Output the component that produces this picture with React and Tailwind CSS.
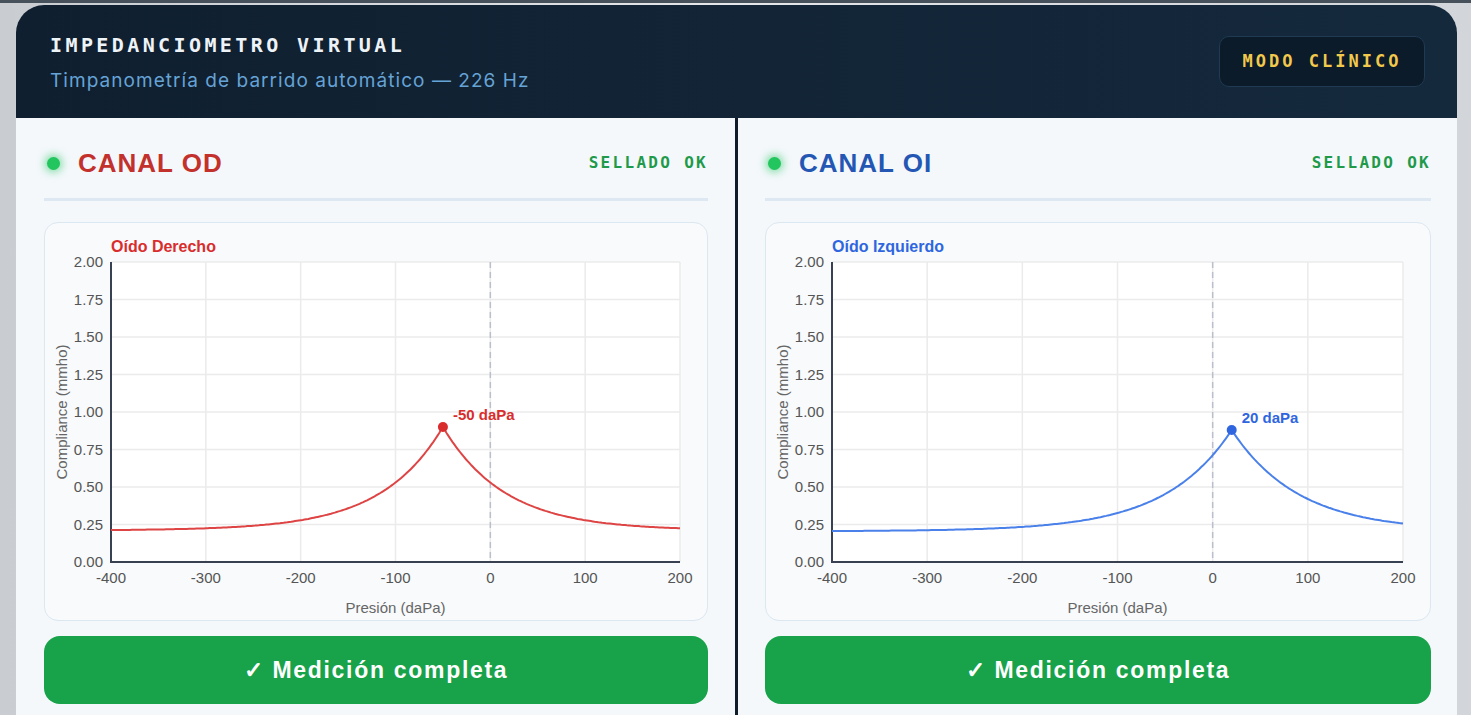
import React from 'react';

// curva de timpanometría: base + pico exponencial
const curvePath = (peak, base, amp, w, px, py) => {
  const pts = [];
  for (let p = -400; p <= 200; p += 2) {
    const c = base + amp * Math.exp(-Math.abs(p - peak) / w);
    pts.push(`${px(p).toFixed(1)},${py(c).toFixed(1)}`);
  }
  return 'M' + pts.join(' L');
};

const Chart = ({ title, titleColor, lineColor, peak, base, amp, w, width, label }) => {
  const H = 397;
  const x0 = 66;
  const x1 = width - 27;
  const y0 = 39;
  const y1 = 339;
  const px = (p) => x0 + ((p + 400) / 600) * (x1 - x0);
  const py = (c) => y1 - (c / 2) * (y1 - y0);
  const yTicks = [0, 0.25, 0.5, 0.75, 1, 1.25, 1.5, 1.75, 2];
  const xTicks = [-400, -300, -200, -100, 0, 100, 200];
  const peakVal = base + amp;
  const font = "'Liberation Sans', Arial, sans-serif";

  return (
    <svg width={width} height={H} style={{ fontFamily: font }}>
      <text x={x0} y={29} fontSize="16" fontWeight="700" fill={titleColor}>{title}</text>
      <rect x={x0} y={y0} width={x1 - x0} height={y1 - y0} fill="#ffffff" />
      {yTicks.map((t) => (
        <line key={'gy' + t} x1={x0} x2={x1} y1={py(t)} y2={py(t)} stroke="#ebebeb" strokeWidth="1.5" />
      ))}
      {xTicks.map((t) => (
        <line key={'gx' + t} x1={px(t)} x2={px(t)} y1={y0} y2={y1} stroke="#ebebeb" strokeWidth="1.5" />
      ))}
      <line x1={px(0)} x2={px(0)} y1={y0} y2={y1} stroke="#b9c0cc" strokeWidth="1.5" strokeDasharray="6 4" />
      <line x1={x0} x2={x0} y1={y0} y2={y1 + 1} stroke="#374151" strokeWidth="2" />
      <line x1={x0 - 1} x2={x1} y1={y1} y2={y1} stroke="#374151" strokeWidth="2" />
      {yTicks.map((t) => (
        <text key={'ly' + t} x={x0 - 8} y={py(t) + 5} fontSize="15" fill="#555" textAnchor="end">{t.toFixed(2)}</text>
      ))}
      {xTicks.map((t) => (
        <text key={'lx' + t} x={px(t)} y={y1 + 21} fontSize="15" fill="#555" textAnchor="middle">{t}</text>
      ))}
      <text x={(x0 + x1) / 2} y={390} fontSize="15" fill="#666" textAnchor="middle">Presión (daPa)</text>
      <text x={0} y={0} fontSize="15" fill="#666" textAnchor="middle" transform="translate(22 189) rotate(-90)">Compliance (mmho)</text>
      <path d={curvePath(peak, base, amp, w, px, py)} fill="none" stroke={lineColor} strokeWidth="2" />
      <circle cx={px(peak)} cy={py(peakVal)} r="5" fill={titleColor} />
      <text x={px(peak) + 10} y={py(peakVal) - 7} fontSize="15" fontWeight="700" fill={titleColor}>{label}</text>
    </svg>
  );
};

const Panel = ({ name, nameColor, className, chart }) => (
  <div className={className}>
    <div className="flex items-center justify-between border-b-[3px] border-[#dde8f2] pt-[29px] pb-[19px]">
      <div className="flex items-center">
        <span className="ml-[3px] h-[13px] w-[13px] rounded-full bg-[#22c55e] shadow-[0_0_8px_2px_rgba(34,197,94,0.6)]" />
        <h2 className={`ml-[18px] h-8 text-[26px] leading-8 font-bold tracking-[1px] font-['Liberation_Sans',Arial,sans-serif] ${nameColor}`}>
          {name}
        </h2>
      </div>
      <span className="text-[16px] font-bold tracking-[2.3px] text-[#1e9a4a] font-['DejaVu_Sans_Mono',monospace]">
        SELLADO OK
      </span>
    </div>
    <div className="mt-[21px] rounded-[14px] border border-[#dbe7f1] bg-[#f8fafc]">
      {chart}
    </div>
    <button
      type="button"
      className="mt-[15px] h-[68px] w-full rounded-[16px] bg-[#18a249] text-[23px] font-bold tracking-[1.7px] text-white font-['Liberation_Sans',Arial,sans-serif]"
    >
      ✓ Medición completa
    </button>
  </div>
);

const App = () => {
  return (
    <div className="min-h-screen overflow-hidden border-t-[3px] border-[#46515c] bg-gradient-to-r from-[#c9cdd2] via-[#e4e6e9] to-[#d2d5d9] pl-4 pr-[14px] pt-[2px]">
      <div className="overflow-hidden rounded-t-[28px] bg-[#f4f8fb]">
        <header className="flex h-[113px] items-center justify-between bg-gradient-to-r from-[#0f1f2f] to-[#15293d] pl-[34px] pr-[32px]">
          <div className="pt-[3px]">
            <h1 className="text-[20px] leading-6 font-bold tracking-[3.4px] text-[#eef3f8] font-['DejaVu_Sans_Mono',monospace]">
              IMPEDANCIOMETRO VIRTUAL
            </h1>
            <p className="mt-[12px] text-[19px] leading-6 tracking-[1.05px] text-[#66a3d6] font-['Inter',sans-serif]">
              Timpanometría de barrido automático — 226 Hz
            </p>
          </div>
          <div className="flex h-[51px] w-[206px] items-center justify-center rounded-[10px] border border-[#1f3a52] bg-[#0b1b29]">
            <span className="text-[17px] font-bold tracking-[3px] text-[#f2c94c] font-['DejaVu_Sans_Mono',monospace]">
              MODO CLÍNICO
            </span>
          </div>
        </header>
        <div className="grid grid-cols-[719px_3px_1fr]">
          <Panel
            name="CANAL OD"
            nameColor="text-[#c3312c]"
            className="pl-[28px] pr-[27px] pb-6"
            chart={
              <Chart
                title="Oído Derecho"
                titleColor="#d92d2d"
                lineColor="#de4444"
                peak={-50}
                base={0.21}
                amp={0.69}
                w={65}
                width={662}
                label="-50 daPa"
              />
            }
          />
          <div className="bg-[#0f1c2a]" />
          <Panel
            name="CANAL OI"
            nameColor="text-[#2457b3]"
            className="pl-[27px] pr-[26px] pb-6"
            chart={
              <Chart
                title="Oído Izquierdo"
                titleColor="#2f66e0"
                lineColor="#4a80ea"
                peak={20}
                base={0.205}
                amp={0.675}
                w={70}
                width={664}
                label="20 daPa"
              />
            }
          />
        </div>
      </div>
    </div>
  );
};

export default App;
